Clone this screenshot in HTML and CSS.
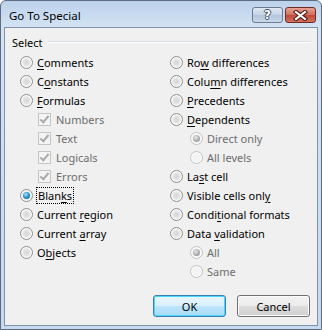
FILE: index.html
```html
<!DOCTYPE html>
<html lang="en">
<head>
    <meta charset="UTF-8">
    <title>Go To Special</title>
    <link rel="stylesheet" href="styles.css">
</head>
<body>
    <div class="window">
        <div class="titlebar">
            <span class="title">Go To Special</span>
            <div class="caption-buttons">
                <span class="cap-btn help">?</span>
                <span class="cap-btn close">
                    <svg width="15" height="11" viewBox="0 0 15 11">
                        <path d="M3 2 L12 9 M12 2 L3 9" stroke="#4b1711" stroke-width="4.2" stroke-linecap="square" fill="none"/>
                        <path d="M3 2 L12 9 M12 2 L3 9" stroke="#fff" stroke-width="2.2" stroke-linecap="square" fill="none"/>
                    </svg>
                </span>
            </div>
        </div>
        <div class="client">
            <div class="group-head"><span>Select</span><span class="rule"></span></div>
            <div class="options">
                <div class="col">
                    <div class="opt"><span class="radio"></span><span><u>C</u>omments</span></div>
                    <div class="opt"><span class="radio"></span><span>C<u>o</u>nstants</span></div>
                    <div class="opt"><span class="radio"></span><span><u>F</u>ormulas</span></div>
                    <div class="opt sub-check disabled"><span class="check"></span><span>Numbers</span></div>
                    <div class="opt sub-check disabled"><span class="check"></span><span>Text</span></div>
                    <div class="opt sub-check disabled"><span class="check"></span><span>Logicals</span></div>
                    <div class="opt sub-check disabled"><span class="check"></span><span>Errors</span></div>
                    <div class="opt"><span class="radio checked"></span><span class="focus">Blan<u>k</u>s</span></div>
                    <div class="opt"><span class="radio"></span><span>Current <u>r</u>egion</span></div>
                    <div class="opt"><span class="radio"></span><span>Current <u>a</u>rray</span></div>
                    <div class="opt"><span class="radio"></span><span>O<u>b</u>jects</span></div>
                </div>
                <div class="col">
                    <div class="opt"><span class="radio"></span><span>Ro<u>w</u> differences</span></div>
                    <div class="opt"><span class="radio"></span><span>Colu<u>m</u>n differences</span></div>
                    <div class="opt"><span class="radio"></span><span><u>P</u>recedents</span></div>
                    <div class="opt"><span class="radio"></span><span><u>D</u>ependents</span></div>
                    <div class="opt sub-radio disabled"><span class="radio checked"></span><span>Direct only</span></div>
                    <div class="opt sub-radio disabled"><span class="radio"></span><span>All levels</span></div>
                    <div class="opt"><span class="radio"></span><span>La<u>s</u>t cell</span></div>
                    <div class="opt"><span class="radio"></span><span>Visible cells onl<u>y</u></span></div>
                    <div class="opt"><span class="radio"></span><span>Condi<u>t</u>ional formats</span></div>
                    <div class="opt"><span class="radio"></span><span>Data <u>v</u>alidation</span></div>
                    <div class="opt sub-radio disabled"><span class="radio checked"></span><span>All</span></div>
                    <div class="opt sub-radio disabled"><span class="radio"></span><span>Same</span></div>
                </div>
            </div>
            <div class="actions">
                <button class="btn default">OK</button>
                <button class="btn">Cancel</button>
            </div>
        </div>
    </div>
</body>
</html>
```

FILE: styles.css
```css
* {
    box-sizing: border-box;
}

html, body {
    margin: 0;
}

body {
    width: 322px;
    height: 330px;
    overflow: hidden;
    background-color: #fff;
    font-family: "Noto Sans", sans-serif;
    font-size: 11px;
    color: #000;
}

.window {
    width: 322px;
    height: 330px;
    border: 1px solid #5d6b80;
    border-radius: 6px 6px 0 0;
    background: linear-gradient(#bcd1eb, #d4e3f4 26px, #c6d9ef);
    padding: 0 3px 3px;
    display: flex;
    flex-direction: column;
}

.titlebar {
    height: 26px;
    display: flex;
    justify-content: space-between;
    align-items: flex-start;
}

.title {
    margin: 6px 0 0 5px;
    font-size: 11.5px;
    line-height: 17px;
}

.caption-buttons {
    display: flex;
    gap: 2px;
    margin: 6px 2px 0 0;
}

.cap-btn {
    width: 31px;
    height: 16px;
    border: 1px solid #6d7b91;
    border-radius: 3px;
    display: flex;
    align-items: center;
    justify-content: center;
}

.help {
    background: linear-gradient(#dfe8f3, #c4d3e6 50%, #b3c5dc 51%, #c9d8ea);
    color: #fff;
    font-family: "DejaVu Sans", sans-serif;
    font-weight: bold;
    font-size: 12px;
    line-height: 14px;
    text-shadow: 1px 0 #3e4f66, -1px 0 #3e4f66, 0 1px #3e4f66, 0 -1px #3e4f66;
}

.close {
    border-color: #6e2c25;
    background: linear-gradient(#e6a293, #d06e5c 50%, #c0493a 51%, #d2705f);
}

.client {
    flex: 1;
    border: 1px solid #7f93ad;
    background-color: #f0f0f0;
    padding-top: 6px;
    display: flex;
    flex-direction: column;
}

.group-head {
    height: 16px;
    display: flex;
    align-items: center;
    margin: 0 6px 0 7px;
}

.group-head .rule {
    flex: 1;
    height: 2px;
    margin-left: 5px;
    border-top: 1px solid #d5dfe5;
    border-bottom: 1px solid #fff;
}

.options {
    display: flex;
    margin-top: 3px;
    padding-left: 15px;
}

.col {
    display: flex;
    flex-direction: column;
}

.col:first-child {
    width: 150px;
}

.opt {
    height: 19px;
    display: flex;
    align-items: center;
    white-space: nowrap;
}

.opt u {
    text-decoration-thickness: 1px;
    text-underline-offset: 2px;
}

.sub-check {
    padding-left: 18px;
}

.sub-radio {
    padding-left: 20px;
}

.disabled {
    color: #6d6d6d;
}

.radio {
    width: 13px;
    height: 13px;
    margin-right: 4px;
    border-radius: 50%;
    border: 1px solid #8e8f8f;
    background: radial-gradient(circle at 50% 50%, #d4d4d4 0, #e6e6e6 45%, #f4f4f4 70%);
    box-shadow: inset 0 0 0 1px #fcfcfc;
    position: relative;
    flex: none;
}

.radio.checked::after {
    content: "";
    position: absolute;
    left: 2px;
    top: 2px;
    width: 7px;
    height: 7px;
    border-radius: 50%;
    background: radial-gradient(circle at 40% 35%, #b9e6fb 0, #37a1df 40%, #0e4f8a 100%);
}

.disabled .radio {
    border-color: #c3c3c3;
    background: #f4f4f4;
}

.disabled .radio.checked::after {
    background: radial-gradient(circle at 40% 35%, #e8e8e8 0, #a8a8a8 60%, #8e8e8e 100%);
}

.check {
    width: 13px;
    height: 13px;
    margin-right: 5px;
    border: 1px solid #c5c5c5;
    background: #f4f4f4;
    position: relative;
    flex: none;
}

.check::after {
    content: "";
    position: absolute;
    left: 3px;
    top: 0;
    width: 3px;
    height: 7px;
    border-right: 2px solid #aaa;
    border-bottom: 2px solid #aaa;
    transform: rotate(40deg);
}

.focus {
    outline: 1px dotted #000;
    outline-offset: 0;
    padding: 0 1px;
    line-height: 15px;
}

.actions {
    margin-top: auto;
    display: flex;
    justify-content: flex-end;
    gap: 11px;
    padding: 0 7px 8px 0;
}

.btn {
    width: 73px;
    height: 22px;
    font-family: "Noto Sans", sans-serif;
    font-size: 11px;
    color: #000;
    border: 1px solid #707070;
    border-radius: 3px;
    background: linear-gradient(#f2f2f2, #ebebeb 50%, #dddddd 51%, #cfcfcf);
    box-shadow: inset 0 0 0 1px #fcfcfc;
    padding: 0;
}

.btn.default {
    border-color: #3c7fb1;
    box-shadow: inset 0 0 0 1px #48d8fb;
    background: linear-gradient(#eaf6fd, #d9f0fc 50%, #bee6fd 51%, #a7d9f5);
}
```
